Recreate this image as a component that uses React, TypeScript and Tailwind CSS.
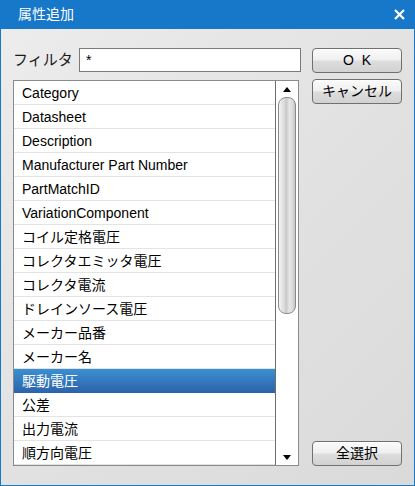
import React from "react";

const items = [
  "Category",
  "Datasheet",
  "Description",
  "Manufacturer Part Number",
  "PartMatchID",
  "VariationComponent",
  "コイル定格電圧",
  "コレクタエミッタ電圧",
  "コレクタ電流",
  "ドレインソース電圧",
  "メーカー品番",
  "メーカー名",
  "駆動電圧",
  "公差",
  "出力電流",
  "順方向電圧",
];

const font = { fontFamily: '"Liberation Sans", "Noto Sans CJK JP", sans-serif' };

function Btn({ label }: { label: string }) {
  return (
    <button className="h-[25px] w-[90px] rounded-[4px] border border-[#707070] bg-[linear-gradient(to_bottom,#fbfbfb_0%,#f0f0f0_45%,#dcdcdc_55%,#d2d2d2_100%)] text-[14px] leading-[23px] text-black shadow-[inset_0_1px_0_#ffffff] whitespace-pre">
      {label}
    </button>
  );
}

export default function App() {
  return (
    <div
      className="flex h-[486px] w-[415px] flex-col bg-[#1777c9] pb-[1px] pl-[1px] pr-[1px]"
      style={font}
    >
      <div className="flex h-[29px] shrink-0 items-center justify-between pl-[17px] pr-[9px]">
        <span className="text-[14px] text-white">属性追加</span>
        <svg width="11" height="11" viewBox="0 0 11 11">
          <path d="M1 1 L10 10 M10 1 L1 10" stroke="#ffffff" strokeWidth="2.2" />
        </svg>
      </div>
      <div className="flex flex-1 bg-[linear-gradient(135deg,#ececec_0%,#e2e2e2_50%,#dadada_100%)] pb-[19px] pl-[12px] pt-[19px]">
        <div className="flex w-[288px] flex-col">
          <div className="flex h-[24px] items-center">
            <span className="w-[66px] text-[15px] text-[#1a1a1a]">フィルタ</span>
            <div className="flex h-[24px] w-[222px] items-start border border-[#7a7a7a] bg-white pl-[6px] pt-[1px] text-[14px]">
              *
            </div>
          </div>
          <div className="mt-[8px] flex h-[386px] w-[286px] overflow-hidden border border-[#8a8a8a] bg-white">
            <div className="flex flex-1 flex-col overflow-hidden">
              {items.map((it, i) => (
                <div
                  key={it}
                  className={
                    i === 12
                      ? "flex h-[24px] shrink-0 items-center bg-[linear-gradient(to_bottom,#3b8fd1,#2d62a9)] pl-[8px] pt-[1px] text-[14px] text-white"
                      : "flex h-[24px] shrink-0 items-center border-b border-[#e3e3e3] pl-[8px] pt-[1px] text-[14px] text-black"
                  }
                >
                  {it}
                </div>
              ))}
            </div>
            <div className="flex w-[23px] shrink-0 flex-col items-center border-l border-[#6e6e6e] bg-white">
              <div className="flex h-[16px] w-full items-center justify-center">
                <svg width="8" height="5" viewBox="0 0 8 5">
                  <path d="M0 5 L4 0 L8 5 Z" fill="#000" />
                </svg>
              </div>
              <div className="h-[217px] w-[18px] rounded-[8px] border border-[#8a8a8a] bg-[linear-gradient(to_right,#f4f4f4_0%,#d8d8d8_35%,#c8c8c8_45%,#e6e6e6_65%,#dadada_85%,#c4c4c4_100%)]" />
              <div className="flex-1" />
              <div className="flex h-[16px] w-full items-center justify-center">
                <svg width="8" height="5" viewBox="0 0 8 5">
                  <path d="M0 0 L8 0 L4 5 Z" fill="#000" />
                </svg>
              </div>
            </div>
          </div>
        </div>
        <div className="ml-[11px] flex w-[90px] flex-col gap-[6px]">
          <Btn label="O  K" />
          <Btn label="キャンセル" />
          <div className="flex-1" />
          <Btn label="全選択" />
        </div>
      </div>
    </div>
  );
}
